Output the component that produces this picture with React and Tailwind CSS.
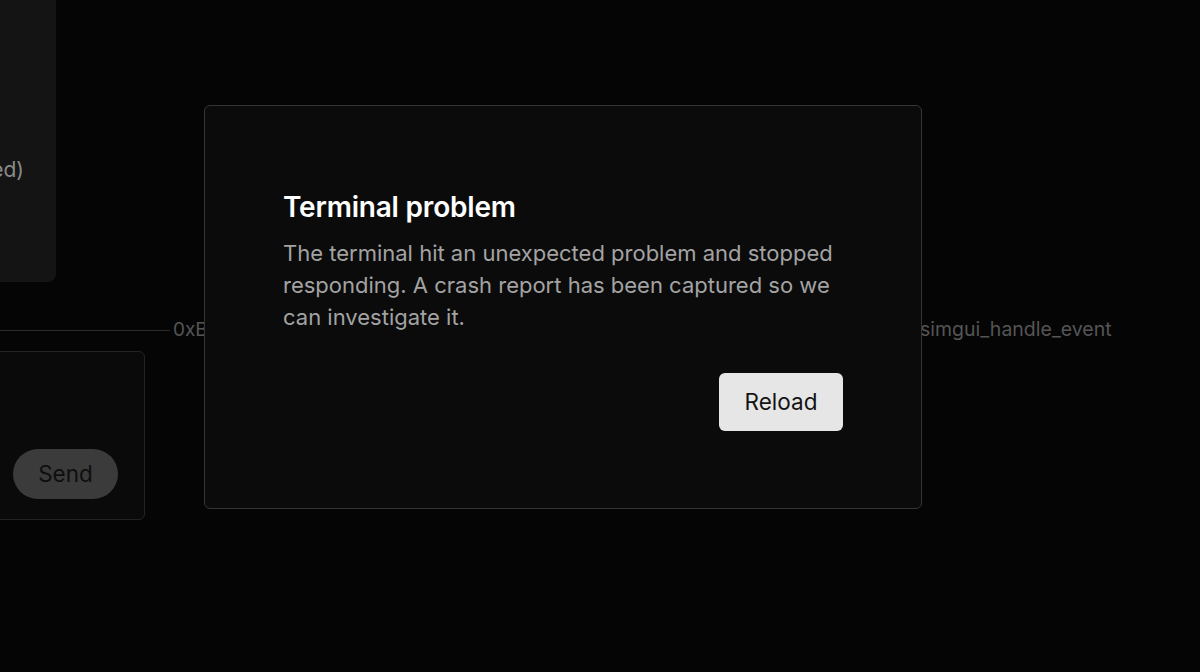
import React from 'react';

const App = () => {
  return (
    <div className="relative w-[1200px] h-[672px] overflow-hidden bg-[#050505] font-['Inter','Noto_Sans',sans-serif]">
      {/* background session view */}
      <div className="flex flex-col">
        <div className="mt-[-20px] ml-[-244px] w-[300px] h-[302px] bg-[#141414] rounded-lg flex items-center justify-end pr-8 pt-[78px]">
          <span className="text-[21px] text-[#8a8a8a]">(reconnected)</span>
        </div>

        <div className="mt-[38px] flex items-center h-[20px]">
          <div className="w-[170px] h-px bg-[#2a2a2a]" />
          <span className="ml-[3px] w-[31px] text-[19px] text-[#555] whitespace-nowrap overflow-hidden">0xB4F21C08</span>
          <div className="w-[716px]" />
          <span className="text-[19.5px] text-[#555] whitespace-nowrap">simgui_handle_event</span>
        </div>

        <div className="mt-[11px] ml-[-155px] w-[300px] h-[169px] bg-[#0a0a0a] border border-[#232323] rounded-md flex items-end justify-end pb-5 pr-[26px]">
          <button className="w-[105px] h-[50px] rounded-full bg-[#3b3b3b] text-[22.5px] text-[#0e0e0e]">Send</button>
        </div>
      </div>

      {/* crash dialog overlay */}
      <div className="absolute left-[204px] top-[105px] w-[718px] h-[404px] bg-[#0b0b0b] border border-[#353535] rounded-md px-[78px] pt-[83px] pb-[77px] flex flex-col">
        <h2 className="text-[28px] font-semibold text-white leading-[36px] tracking-[-0.2px]">Terminal problem</h2>
        <p className="mt-[12px] text-[22px] leading-[32px] text-[#a3a3a3]">
          The terminal hit an unexpected problem and stopped responding. A crash report has been captured so we can investigate it.
        </p>
        <div className="mt-auto flex justify-end">
          <button className="w-[124px] h-[58px] rounded-md bg-[#e6e6e6] text-[22.5px] text-[#141414]">Reload</button>
        </div>
      </div>
    </div>
  );
};

export default App;
